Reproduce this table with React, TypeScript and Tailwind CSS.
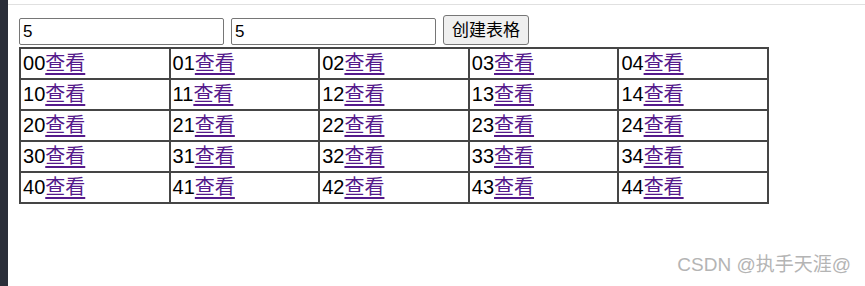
import { useState } from "react";

const font = { fontFamily: '"Liberation Sans", "Noto Sans CJK SC", sans-serif' };

export default function App() {
  const [rows, setRows] = useState("5");
  const [cols, setCols] = useState("5");
  const [grid, setGrid] = useState({ r: 5, c: 5 });

  return (
    <div className="relative flex h-[286px] w-[865px] overflow-hidden bg-white" style={font}>
      <div className="w-[8px] shrink-0 bg-[#2a2e39]" />
      <div className="flex-1">
        <div className="mt-[4px] h-px bg-[#e0e0e0]" />
        <div className="pl-[11px] pt-[10px]">
          <div className="flex items-end gap-[7px]">
            <input
              value={rows}
              onChange={(e) => setRows(e.target.value)}
              className="h-[27px] w-[205px] rounded-[2px] border border-[#767676] px-[3px] text-[17px] text-black outline-none"
            />
            <input
              value={cols}
              onChange={(e) => setCols(e.target.value)}
              className="h-[27px] w-[205px] rounded-[2px] border border-[#767676] px-[3px] text-[17px] text-black outline-none"
            />
            <button
              type="button"
              onClick={() => setGrid({ r: Number(rows) || 0, c: Number(cols) || 0 })}
              className="h-[30px] w-[86px] rounded-[3px] border border-[#767676] bg-[#efefef] text-[17px] leading-none text-black"
            >
              创建表格
            </button>
          </div>
          <table className="mt-[2px] w-[750px] table-fixed border-collapse border-2 border-[#454545] text-[20px] text-black">
            <tbody>
              {Array.from({ length: grid.r }).map((_, i) => (
                <tr key={i}>
                  {Array.from({ length: grid.c }).map((_, j) => (
                    <td
                      key={j}
                      className="h-[31px] border-2 border-[#454545] p-0 pl-[2px] align-middle leading-[29px]"
                    >
                      {i}
                      {j}
                      <a href="#" className="text-[#551a8b] underline underline-offset-[3px]">
                        查看
                      </a>
                    </td>
                  ))}
                </tr>
              ))}
            </tbody>
          </table>
        </div>
      </div>
      <div className="absolute right-[14px] bottom-[7px] text-[19px] text-[#b4b4b4] [text-shadow:0_0_1px_#fff]">
        CSDN @执手天涯@
      </div>
    </div>
  );
}
